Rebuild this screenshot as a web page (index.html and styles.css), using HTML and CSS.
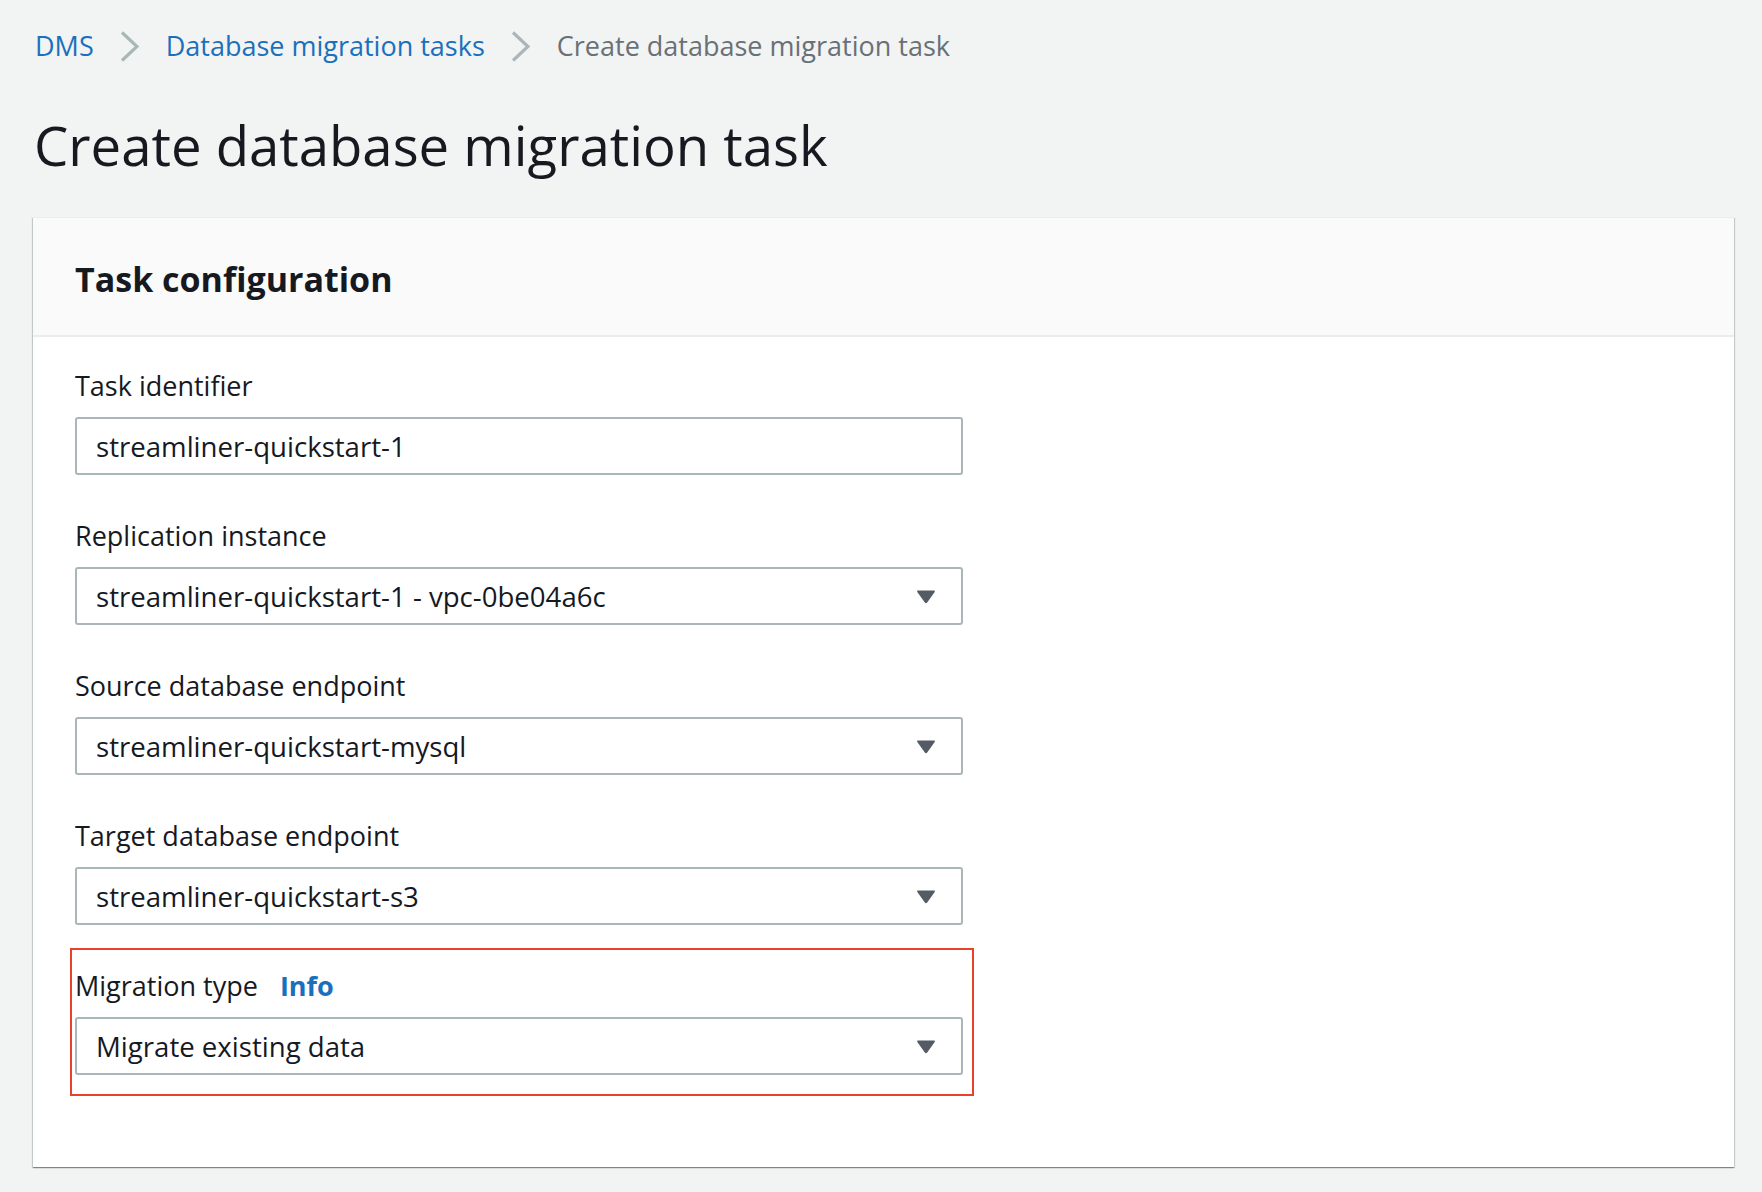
FILE: index.html
```html
<!DOCTYPE html>
<html lang="en">
<head>
<meta charset="utf-8">
<title>Create database migration task</title>
<link rel="stylesheet" href="styles.css">
</head>
<body>
<div class="page">
  <nav class="breadcrumbs">
    <a class="crumb-link" href="#">DMS</a>
    <svg class="chev" width="19" height="31" viewBox="0 0 19 31"><polyline points="2,1.5 17,15.5 2,29.5" fill="none" stroke="#aab7b8" stroke-width="3.2" stroke-linejoin="miter"/></svg>
    <a class="crumb-link" href="#">Database migration tasks</a>
    <svg class="chev" width="19" height="31" viewBox="0 0 19 31"><polyline points="2,1.5 17,15.5 2,29.5" fill="none" stroke="#aab7b8" stroke-width="3.2" stroke-linejoin="miter"/></svg>
    <span class="crumb-current">Create database migration task</span>
  </nav>

  <h1 class="title">Create database migration task</h1>

  <section class="card">
    <header class="card-header">
      <h2 class="card-title">Task configuration</h2>
    </header>
    <div class="card-body">
      <div class="field">
        <label class="label">Task identifier</label>
        <div class="input"><span class="value">streamliner-quickstart-1</span></div>
      </div>
      <div class="field">
        <label class="label">Replication instance</label>
        <div class="input select"><span class="value">streamliner-quickstart-1 - vpc-0be04a6c</span>
          <svg class="caret" width="20" height="15" viewBox="0 0 20 15"><path d="M2 1.5 H18 Q19.5 1.5 18.7 2.9 L11.2 13.6 Q10 15 8.8 13.6 L1.3 2.9 Q0.5 1.5 2 1.5 Z" fill="#545b64"/></svg>
        </div>
      </div>
      <div class="field">
        <label class="label">Source database endpoint</label>
        <div class="input select"><span class="value">streamliner-quickstart-mysql</span>
          <svg class="caret" width="20" height="15" viewBox="0 0 20 15"><path d="M2 1.5 H18 Q19.5 1.5 18.7 2.9 L11.2 13.6 Q10 15 8.8 13.6 L1.3 2.9 Q0.5 1.5 2 1.5 Z" fill="#545b64"/></svg>
        </div>
      </div>
      <div class="field">
        <label class="label">Target database endpoint</label>
        <div class="input select"><span class="value">streamliner-quickstart-s3</span>
          <svg class="caret" width="20" height="15" viewBox="0 0 20 15"><path d="M2 1.5 H18 Q19.5 1.5 18.7 2.9 L11.2 13.6 Q10 15 8.8 13.6 L1.3 2.9 Q0.5 1.5 2 1.5 Z" fill="#545b64"/></svg>
        </div>
      </div>
      <div class="field highlight">
        <label class="label">Migration type <a class="info" href="#">Info</a></label>
        <div class="input select"><span class="value">Migrate existing data</span>
          <svg class="caret" width="20" height="15" viewBox="0 0 20 15"><path d="M2 1.5 H18 Q19.5 1.5 18.7 2.9 L11.2 13.6 Q10 15 8.8 13.6 L1.3 2.9 Q0.5 1.5 2 1.5 Z" fill="#545b64"/></svg>
        </div>
      </div>
    </div>
  </section>
</div>
</body>
</html>
```

FILE: styles.css
```css
* { box-sizing: border-box; }
html, body { margin: 0; padding: 0; }
body {
  background: #f2f3f3;
  font-family: "Open Sans", "Noto Sans", sans-serif;
  color: #16191f;
  width: 1762px;
  height: 1192px;
  overflow: hidden;
}
.page {
  padding: 28px 28px 0 33px;
}
.breadcrumbs {
  display: flex;
  align-items: center;
  height: 36px;
  padding-left: 2px;
  font-size: 27px;
  line-height: 36px;
}
.crumb-link {
  color: #1a70bc;
  text-decoration: none;
}
.chev {
  margin: 0 27px 0 26px;
  flex: none;
}
.crumb-current {
  color: #687078;
}
.title {
  margin: 49px 0 0 1px;
  font-size: 54.5px;
  line-height: 64px;
  font-weight: 400;
  color: #16191f;
}
.card {
  margin-top: 40px;
  width: 1701px;
  background: #fff;
  border-top: 1px solid #eaeded;
  box-shadow: 0 1px 1px 0 rgba(0, 28, 36, 0.3), 1px 1px 1px 0 rgba(0, 28, 36, 0.15), -1px 1px 1px 0 rgba(0, 28, 36, 0.15);
}
.card-header {
  background: #fafafa;
  border-bottom: 2px solid #eaeded;
  padding: 39px 42px 34px;
}
.card-title {
  margin: 0;
  font-size: 34px;
  line-height: 44px;
  font-weight: 700;
}
.card-body {
  padding: 32px 42px 71px;
  display: flex;
  flex-direction: column;
  align-items: flex-start;
}
.field + .field {
  margin-top: 44px;
}
.label {
  display: block;
  font-size: 27px;
  line-height: 34px;
}
.info {
  color: #1a70bc;
  font-weight: 700;
  text-decoration: none;
  margin-left: 15px;
}
.input {
  margin-top: 14px;
  height: 58px;
  width: 888px;
  border: 2px solid #aab7b8;
  border-radius: 3px;
  background: #fff;
  display: flex;
  align-items: center;
  padding: 0 25px 0 19px;
  font-size: 27.6px;
}
.value { flex: 1; }
.caret { flex: none; }
.field.highlight {
  margin: 23px -11px 0 -5px;
  padding: 19px 9px 19px 3px;
  border: 2px solid #e8412c;
}
```
